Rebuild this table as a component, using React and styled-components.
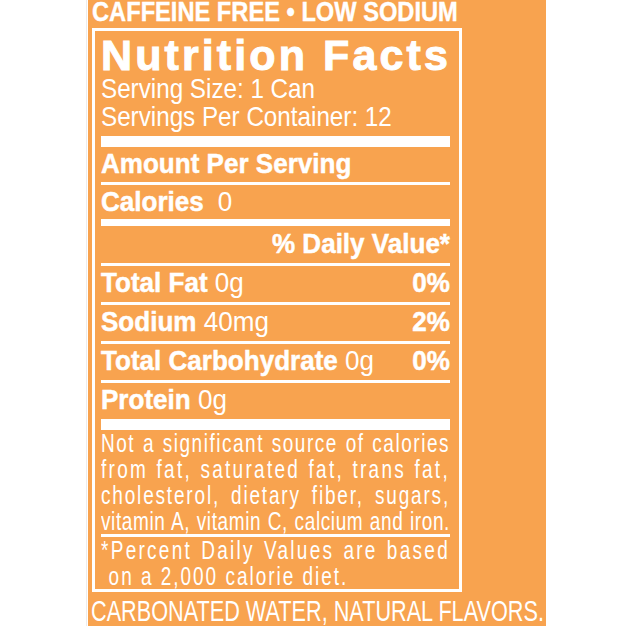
import React from 'react';
import styled, { createGlobalStyle, css } from 'styled-components';

const ORANGE = '#f8a34f';

// no condensed face is installed, so Arial-metric text is squeezed horizontally
const squeezeBlock = (s) => css`
  width: ${100 / s}%;
  transform: scaleX(${s});
  transform-origin: left center;
`;

const GlobalStyle = createGlobalStyle`
  html, body {
    margin: 0;
    padding: 0;
    background: #fff;
    overflow: hidden;
  }
  body {
    font-family: 'Liberation Sans', Arial, sans-serif;
    color: #fff;
  }
`;

const nutrients = [
  { name: 'Total Fat', amount: '0g', dv: '0%' },
  { name: 'Sodium', amount: '40mg', dv: '2%' },
  { name: 'Total Carbohydrate', amount: '0g', dv: '0%' },
  { name: 'Protein', amount: '0g' },
];

// letter spacing per line so each one fills the panel like the printed label
const disclaimer = [
  { text: 'Not a significant source of calories', ls: 2.0 },
  { text: 'from fat, saturated fat, trans fat,', ls: 3.0 },
  { text: 'cholesterol, dietary fiber, sugars,', ls: 2.4 },
  { text: 'vitamin A, vitamin C, calcium and iron.', ls: 0.8 },
];

export default function App() {
  return (
    <>
      <GlobalStyle />
      <Page>
        <Label>
          <Banner>
            <Squeeze $s={0.845}>CAFFEINE FREE • LOW SODIUM</Squeeze>
          </Banner>
          <Panel>
            <Title>Nutrition Facts</Title>
            <Serving>Serving Size: 1 Can</Serving>
            <Serving>Servings Per Container: 12</Serving>
            <Rule $h={11} $mt={5} />
            <Row $pb={4}>
              <b>Amount Per Serving</b>
            </Row>
            <Rule $h={3} />
            <Row $pb={3}>
              <span>
                <b>Calories</b>
                <Gap />0
              </span>
            </Row>
            <Rule $h={7} />
            <Row $pt={4} $pb={5} $right>
              <b>% Daily Value*</b>
            </Row>
            {nutrients.map((n) => (
              <React.Fragment key={n.name}>
                <Rule $h={3} />
                <Row>
                  <span>
                    <b>{n.name}</b> {n.amount}
                  </span>
                  {n.dv && <b>{n.dv}</b>}
                </Row>
              </React.Fragment>
            ))}
            <Rule $h={11} />
            <Note>
              {disclaimer.map((l) => (
                <NoteLine key={l.text} $ls={l.ls}>
                  {l.text}
                </NoteLine>
              ))}
            </Note>
            <Rule $h={3} />
            <Note>
              <NoteLine $ls={3.0}>*Percent Daily Values are based</NoteLine>
              <NoteLine $ls={2.6} $last>
                on a 2,000 calorie diet.
              </NoteLine>
            </Note>
          </Panel>
          <Ingredients>
            <Squeeze $s={0.722}>CARBONATED WATER, NATURAL FLAVORS.</Squeeze>
          </Ingredients>
        </Label>
      </Page>
    </>
  );
}

const Page = styled.div`
  display: flex;
  min-height: 100vh;
  padding-left: 88px;
`;

const Label = styled.div`
  width: 458px;
  min-height: 626px;
  background: ${ORANGE};
  box-shadow: -1px 0 0 #fff, -2px 0 0 #ececec;
  display: flex;
  flex-direction: column;
  overflow: hidden;
`;

const Squeeze = styled.span`
  display: inline-block;
  white-space: nowrap;
  transform: scaleX(${(p) => p.$s});
  transform-origin: left center;
`;

const Banner = styled.div`
  padding: 0 0 4px 4px;
  font-size: 28px;
  line-height: 24px;
  font-weight: 700;
  white-space: nowrap;
  -webkit-text-stroke: 0.4px #fff;
`;

const Panel = styled.div`
  width: 370px;
  box-sizing: border-box;
  margin-left: 4px;
  border: 3px solid #fff;
  padding: 5px 9px 0 6px;
  display: flex;
  flex-direction: column;
`;

const Title = styled.div`
  font-weight: 700;
  font-size: 43px;
  line-height: 39px;
  letter-spacing: 3.1px;
  white-space: nowrap;
  -webkit-text-stroke: 1px #fff;
`;

const Serving = styled.div`
  ${squeezeBlock(0.865)}
  font-size: 28px;
  line-height: 28px;
  white-space: nowrap;
`;

const Rule = styled.div`
  height: ${(p) => p.$h}px;
  margin-top: ${(p) => p.$mt || 0}px;
  background: #fff;
`;

const Row = styled.div`
  ${squeezeBlock(0.93)}
  box-sizing: border-box;
  display: flex;
  justify-content: ${(p) => (p.$right ? 'flex-end' : 'space-between')};
  padding-top: ${(p) => p.$pt ?? 3}px;
  padding-bottom: ${(p) => p.$pb ?? 5}px;
  font-size: 28px;
  line-height: 28px;
  white-space: nowrap;

  b {
    font-weight: 700;
    -webkit-text-stroke: 0.5px #fff;
  }
`;

const Gap = styled.span`
  display: inline-block;
  width: 15px;
`;

const Note = styled.div`
  display: flex;
  flex-direction: column;
  font-size: 25px;
  line-height: 26px;
`;

const NoteLine = styled.div`
  ${squeezeBlock(0.76)}
  box-sizing: border-box;
  white-space: nowrap;
  letter-spacing: ${(p) => p.$ls}px;
  text-align: justify;
  text-align-last: ${(p) => (p.$last ? 'left' : 'justify')};
  padding-left: ${(p) => (p.$last ? 10 : 0)}px;
`;

const Ingredients = styled.div`
  padding: 4px 0 0 3px;
  font-size: 30px;
  line-height: 30px;
  white-space: nowrap;
`;
